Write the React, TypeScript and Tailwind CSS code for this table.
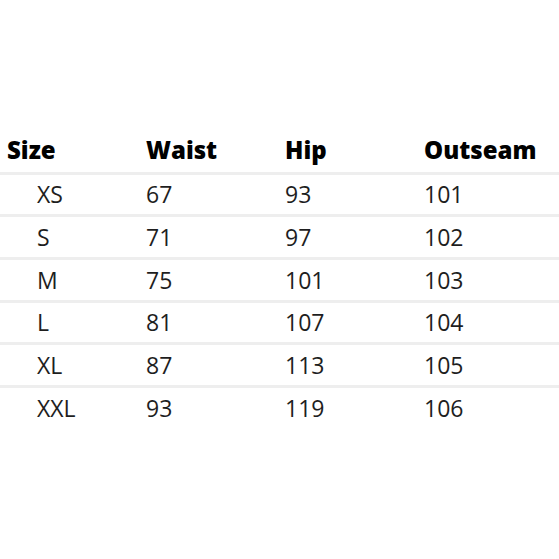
import React from "react";

const headers = ["Size", "Waist", "Hip", "Outseam"];

const rows: [string, number, number, number][] = [
  ["XS", 67, 93, 101],
  ["S", 71, 97, 102],
  ["M", 75, 101, 103],
  ["L", 81, 107, 104],
  ["XL", 87, 113, 105],
  ["XXL", 93, 119, 106],
];

const App: React.FC = () => {
  return (
    <div
      className="w-[559px] h-[559px] bg-white pt-[129px]"
      style={{ fontFamily: '"Open Sans", "Liberation Sans", sans-serif' }}
    >
      <div className="grid grid-cols-[139px_139px_139px_139px] pl-[7px] h-[42.67px] items-center text-[24px] font-extrabold text-black">
        {headers.map((h) => (
          <div key={h}>{h}</div>
        ))}
      </div>
      {rows.map(([size, waist, hip, outseam]) => (
        <div
          key={size}
          className="grid grid-cols-[139px_139px_139px_139px] pl-[7px] h-[42.67px] items-center border-t-[3px] border-[#eeeeee] text-[23px] text-[#1e1e1e]"
        >
          <div className="pl-[30px]">{size}</div>
          <div>{waist}</div>
          <div>{hip}</div>
          <div>{outseam}</div>
        </div>
      ))}
    </div>
  );
};

export default App;
